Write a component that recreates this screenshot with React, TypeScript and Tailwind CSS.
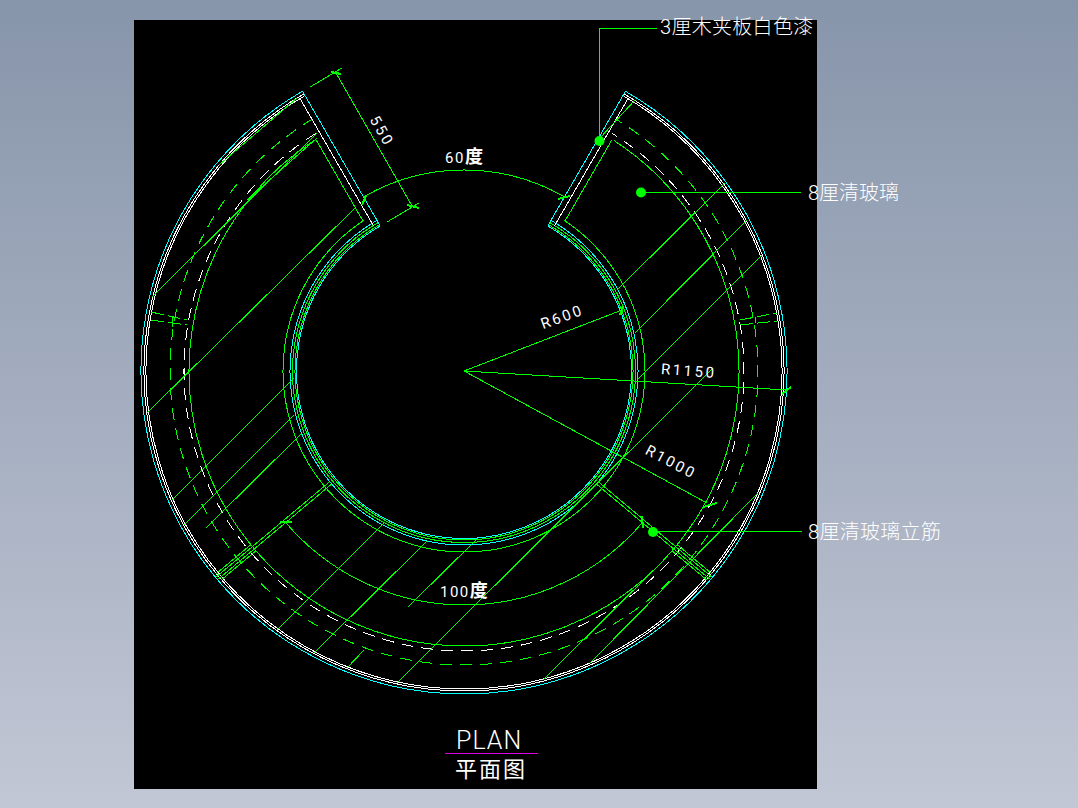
import React from 'react';

const CX = 464;
const CY = 371;

// angle measured from straight up, clockwise positive
const pt = (r: number, deg: number) => {
  const a = (deg * Math.PI) / 180;
  return { x: CX + r * Math.sin(a), y: CY - r * Math.cos(a) };
};

// long way round, from the left jamb past the bottom to the right jamb
const ringArc = (r: number, half = 30) => {
  const a = pt(r, -half);
  const b = pt(r, half);
  return `M${a.x} ${a.y}A${r} ${r} 0 1 0 ${b.x} ${b.y}`;
};

// short arc through the top or the bottom of the circle
const dimArc = (r: number, from: number, to: number, sweep: 0 | 1) => {
  const a = pt(r, from);
  const b = pt(r, to);
  return `M${a.x} ${a.y}A${r} ${r} 0 0 ${sweep} ${b.x} ${b.y}`;
};

// a jamb line offset sideways from the radial at +/-30 degrees
const jamb = (side: -1 | 1, offset: number, r1: number, r2: number) => {
  const a = (side * 30 * Math.PI) / 180;
  const ux = Math.sin(a);
  const uy = -Math.cos(a);
  const nx = side * Math.cos(a);
  const ny = side * Math.sin(a);
  const s1 = Math.sqrt(r1 * r1 - offset * offset);
  const s2 = Math.sqrt(r2 * r2 - offset * offset);
  return {
    x1: CX + ux * s1 + nx * offset,
    y1: CY + uy * s1 + ny * offset,
    x2: CX + ux * s2 + nx * offset,
    y2: CY + uy * s2 + ny * offset,
  };
};

// a rib line running along the radial at `deg`, offset to one side
const rib = (deg: number, offset: number, r1: number, r2: number) => {
  const a = (deg * Math.PI) / 180;
  const ux = Math.sin(a);
  const uy = -Math.cos(a);
  const nx = Math.cos(a);
  const ny = Math.sin(a);
  return {
    x1: CX + ux * r1 + nx * offset,
    y1: CY + uy * r1 + ny * offset,
    x2: CX + ux * r2 + nx * offset,
    y2: CY + uy * r2 + ny * offset,
  };
};

const GREEN = '#00ff00';
const CYAN = '#00ffff';

const hatch = [
  [152, 297, 317, 133],
  [147, 413, 356, 207],
  [172, 500, 294, 378],
  [184, 525, 294, 415],
  [206, 528, 302, 433],
  [277, 630, 384, 523],
  [617, 290, 725, 183],
  [314, 653, 427, 541],
  [635, 333, 747, 220],
  [347, 668, 364, 650],
  [408, 607, 478, 538],
  [637, 380, 762, 255],
  [397, 683, 713, 368],
  [543, 680, 667, 557],
  [590, 663, 758, 493],
  [600, 138, 635, 100],
  [247, 200, 317, 138],
  [219, 165, 297, 98],
];

const leaders = [
  [464, 371, 622, 310],
  [464, 371, 787, 390],
  [464, 371, 707, 503],
  [336, 73, 412, 206],
  [310, 87, 342, 68],
  [387, 222, 419, 203],
];

const ticks = [
  [331, 72, 341, 74],
  [407, 205, 419, 208],
  [362, 205, 366, 196],
  [558, 199, 570, 196],
  [620, 315, 623, 306],
  [782, 394, 791, 387],
  [703, 507, 717, 503],
  [280, 522, 292, 522],
  [642, 516, 643, 528],
];

const ribDashes = [
  [151, 312, 187, 320],
  [151, 320, 187, 325],
  [740, 320, 777, 313],
  [740, 325, 777, 321],
];

const ribStubs = [
  [173, 316, 172, 327],
  [755, 317, 755, 323],
];

const Drawing = () => (
  <svg
    className="absolute inset-0 h-full w-full"
    viewBox="134 20 683 769"
    fill="none"
    shapeRendering="crispEdges"
  >
    {/* outer wall */}
    <path d={ringArc(323)} stroke={CYAN} />
    <path d={ringArc(320)} stroke="#fff" />
    <path d={ringArc(318)} stroke="#fff" />
    {/* inner wall */}
    <path d={ringArc(174)} stroke={CYAN} />
    <path d={ringArc(171.5)} stroke={GREEN} />
    <path d={ringArc(169)} stroke={GREEN} />
    <path d={ringArc(167.5)} stroke={CYAN} />
    {/* glass + centre lines */}
    <path d={ringArc(181, 33.5)} stroke={GREEN} />
    <path d={ringArc(275, 33)} stroke={GREEN} />
    <path d={ringArc(280, 32)} stroke="#fff" strokeDasharray="12 8" />
    <path d={ringArc(294, 31)} stroke={GREEN} strokeDasharray="12 8" />

    {/* jambs */}
    {([-1, 1] as const).map((side) => (
      <g key={side}>
        <line {...jamb(side, 0, 323, 168)} stroke={CYAN} />
        <line {...jamb(side, 5.8, 319, 171)} stroke="#fff" />
        <line {...jamb(side, 12.5, 275, 181)} stroke={GREEN} />
      </g>
    ))}

    {/* ribs at +/-130 degrees */}
    {[-130, 130].map((deg) => (
      <g key={deg} stroke={GREEN}>
        <line {...rib(deg, -1.5, 175, 322)} />
        <line {...rib(deg, 1.5, 175, 322)} />
        <line {...rib(deg, -4, 275, 320)} />
        <line {...rib(deg, 4, 275, 320)} />
      </g>
    ))}

    {hatch.map(([x1, y1, x2, y2], i) => (
      <line key={i} x1={x1} y1={y1} x2={x2} y2={y2} stroke={GREEN} />
    ))}

    {/* dimensions */}
    <path d={dimArc(201, -30, 30, 1)} stroke={GREEN} />
    <path d={dimArc(234, -130, 130, 0)} stroke={GREEN} />
    {leaders.map(([x1, y1, x2, y2], i) => (
      <line key={i} x1={x1} y1={y1} x2={x2} y2={y2} stroke={GREEN} />
    ))}
    {ticks.map(([x1, y1, x2, y2], i) => (
      <line key={i} x1={x1} y1={y1} x2={x2} y2={y2} stroke={GREEN} strokeWidth={2} />
    ))}
    {ribDashes.map(([x1, y1, x2, y2], i) => (
      <line key={i} x1={x1} y1={y1} x2={x2} y2={y2} stroke={GREEN} strokeDasharray="13 4" />
    ))}
    {ribStubs.map(([x1, y1, x2, y2], i) => (
      <line key={i} x1={x1} y1={y1} x2={x2} y2={y2} stroke={GREEN} />
    ))}

    {/* callouts */}
    <path d="M657 28.5H599.5V141" stroke={GREEN} />
    <path d="M641 192.5H801" stroke={GREEN} />
    <path d="M653 531.5H802" stroke={GREEN} />
    <g fill={GREEN} shapeRendering="auto">
      <circle cx={599.5} cy={141} r={5} />
      <circle cx={641} cy={192.5} r={5} />
      <circle cx={653} cy={532} r={5} />
    </g>

    {/* title underline */}
    <line x1={445} y1={753.5} x2={538} y2={753.5} stroke="#e000e0" />
  </svg>
);

export default function App() {
  const base =
    "absolute whitespace-nowrap text-white leading-none font-['Roboto','Noto_Sans_CJK_SC',sans-serif]";

  return (
    <div className="h-[808px] w-full overflow-hidden bg-gradient-to-b from-[#8795aa] to-[#c2c7d5] pl-[134px] pt-[20px]">
      <div className="relative h-[769px] w-[683px] bg-black">
        <Drawing />

        <span className={`${base} left-[526px] top-[-3px] text-[20px] font-light tracking-[0.3px]`}>3厘木夹板白色漆</span>
        <span className={`${base} left-[674px] top-[163px] text-[20px] font-light`}>8厘清玻璃</span>
        <span className={`${base} left-[674px] top-[502px] text-[20px] font-light tracking-[0.3px]`}>8厘清玻璃立筋</span>

        <span className={`${base} left-[311px] top-[128px] text-[15px] tracking-[1.5px]`}>60<span className="font-bold text-[18px]">度</span></span>
        <span className={`${base} left-[306px] top-[562px] text-[15px] tracking-[1.5px]`}>100<span className="font-bold text-[18px]">度</span></span>

        <span className={`${base} left-[231px] top-[104px] rotate-[60deg] text-[15px] tracking-[2.5px]`}>550</span>
        <span className={`${base} left-[406px] top-[290px] rotate-[-20deg] text-[15px] tracking-[2.5px]`}>R600</span>
        <span className={`${base} left-[527px] top-[344px] rotate-[4deg] text-[15px] tracking-[2.5px]`}>R1150</span>
        <span className={`${base} left-[509px] top-[435px] rotate-[28deg] text-[15px] tracking-[2.5px]`}>R1000</span>

        <span className={`${base} left-[322px] top-[708px] text-[25px] font-light tracking-[1px]`}>PLAN</span>
        <span className={`${base} left-[321px] top-[739px] text-[22px] tracking-[2px]`}>平面图</span>
      </div>
    </div>
  );
}
